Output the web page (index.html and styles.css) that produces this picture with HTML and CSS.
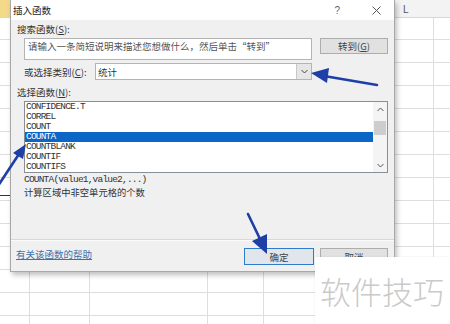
FILE: index.html
```html
<!DOCTYPE html>
<html lang="zh-CN">
<head>
    <meta charset="UTF-8">
    <meta name="viewport" content="width=device-width, initial-scale=1.0">
    <title>插入函数</title>
    <link rel="stylesheet" href="styles.css">
</head>
<body>
    <div class="sheet">
        <div class="sheet-head">
            <span class="sel-col"></span>
            <span class="col-l">L</span>
        </div>
        <div class="sheet-body">
            <span class="cell-mark"></span>
        </div>
    </div>

    <div class="dialog">
        <div class="titlebar">
            <span class="title">插入函数</span>
            <span class="help">?</span>
            <svg class="close" width="9" height="9" viewBox="0 0 9 9">
                <path d="M0.5 0.5 L8.5 8.5 M8.5 0.5 L0.5 8.5" stroke="#555" stroke-width="1" fill="none"/>
            </svg>
        </div>

        <div class="lbl">搜索函数(<u>S</u>):</div>
        <div class="search-row">
            <div class="search-box">请输入一条简短说明来描述您想做什么，然后单击“转到”</div>
            <div class="btn go">转到(<u>G</u>)</div>
        </div>

        <div class="cat-row">
            <span class="cat-lbl">或选择类别(<u>C</u>):</span>
            <div class="combo">
                <span class="combo-text">统计</span>
                <span class="combo-drop">
                    <svg width="7" height="5" viewBox="0 0 7 5">
                        <polyline points="0.5,1 3.5,4 6.5,1" stroke="#444" stroke-width="1" fill="none"/>
                    </svg>
                </span>
            </div>
        </div>

        <div class="lbl lbl-list">选择函数(<u>N</u>):</div>
        <div class="list">
            <div class="items">
                <div class="item">CONFIDENCE.T</div>
                <div class="item">CORREL</div>
                <div class="item">COUNT</div>
                <div class="item selected">COUNTA</div>
                <div class="item">COUNTBLANK</div>
                <div class="item">COUNTIF</div>
                <div class="item">COUNTIFS</div>
            </div>
            <div class="scroll">
                <span class="arrow">
                    <svg width="7" height="5" viewBox="0 0 7 5">
                        <polyline points="0.5,4 3.5,1 6.5,4" stroke="#555" stroke-width="1" fill="none"/>
                    </svg>
                </span>
                <span class="thumb"></span>
                <span class="track"></span>
                <span class="arrow">
                    <svg width="7" height="5" viewBox="0 0 7 5">
                        <polyline points="0.5,1 3.5,4 6.5,1" stroke="#555" stroke-width="1" fill="none"/>
                    </svg>
                </span>
            </div>
        </div>

        <div class="desc">
            <div class="syntax">COUNTA(value1,value2,...)</div>
            <div class="summary">计算区域中非空单元格的个数</div>
        </div>

        <div class="sep"></div>

        <div class="foot">
            <a class="help-link" href="#">有关该函数的帮助</a>
            <div class="btn ok">确定</div>
            <div class="btn cancel">取消</div>
        </div>
    </div>

    <div class="watermark">软件技巧</div>

    <svg class="arrows" width="450" height="324" viewBox="0 0 450 324">
        <g stroke="#1d3fa6" stroke-width="2.6" fill="none" stroke-linecap="round">
            <line x1="-2" y1="186" x2="19" y2="154"/>
            <line x1="377" y1="85" x2="324" y2="76"/>
            <line x1="248" y1="214" x2="260" y2="239"/>
        </g>
        <g fill="#1d3fa6">
            <polygon points="26,144 23,159 13,153"/>
            <polygon points="311,73 329,68 327,83"/>
            <polygon points="267,254 252,241 267,234"/>
        </g>
    </svg>
</body>
</html>
```

FILE: styles.css
```css
* {
    margin: 0;
    padding: 0;
    box-sizing: border-box;
}
body {
    width: 450px;
    height: 324px;
    overflow: hidden;
    position: relative;
    background-color: white;
    font-family: "Noto Sans CJK SC", sans-serif;
}
.sheet-head {
    height: 18px;
    display: flex;
    background-color: #f3f3f3;
    border-bottom: 1px solid #d6d6d6;
}
.sel-col {
    width: 10px;
    height: 17px;
    background-color: #f5d98a;
}
.col-l {
    margin-left: 393px;
    font-family: "Liberation Sans", sans-serif;
    font-size: 10px;
    line-height: 20px;
    color: #555;
}
.sheet-body {
    height: 306px;
    display: flex;
    flex-direction: column;
    background-image:
        repeating-linear-gradient(to bottom, transparent 0 21px, #dedede 21px 22px, transparent 22px 23px),
        linear-gradient(to right, transparent 0 29px, #dedede 29px 30px, transparent 30px 89px, #dedede 89px 90px, transparent 90px 207px, #dedede 207px 208px, transparent 208px 263px, #dedede 263px 264px, transparent 264px 433px, #dedede 433px 434px, transparent 434px);
}
.cell-mark {
    width: 10px;
    height: 1px;
    margin-top: 177px;
    background-color: #333;
}

/* dialog window */
.dialog {
    position: absolute;
    left: 10px;
    top: 0;
    width: 385px;
    height: 272px;
    border: 1px solid #a8a8a8;
    border-top: none;
    background-color: #f0f0f0;
    box-shadow: 2px 3px 5px rgba(0, 0, 0, 0.25);
    font-size: 9.5px;
    color: #333;
}
.titlebar {
    height: 20px;
    display: flex;
    align-items: center;
    background-color: white;
    padding-left: 2px;
}
.title {
    flex: 1;
    font-size: 9.5px;
    color: #222;
}
.help {
    font-family: "Liberation Sans", sans-serif;
    font-size: 10px;
    color: #666;
    margin-right: 32px;
}
.close {
    margin-right: 13px;
}
.lbl {
    height: 10px;
    line-height: 10px;
    margin: 4px 0 0 6px;
}
.lbl-list {
    margin-top: 7px;
}
.search-row {
    display: flex;
    align-items: flex-start;
    margin: 4px 0 0 13px;
}
.search-box {
    width: 288px;
    height: 22px;
    border: 1px solid #b4b4b4;
    background-color: white;
    padding: 2px 3px;
    line-height: 10px;
    color: #555;
    white-space: nowrap;
    overflow: hidden;
}
.btn {
    height: 17px;
    border: 1px solid #adadad;
    background-color: #e1e1e1;
    display: flex;
    justify-content: center;
    align-items: center;
    color: #444;
}
.go {
    width: 68px;
    height: 16px;
    margin-left: 8px;
}
.cat-row {
    display: flex;
    align-items: center;
    height: 17px;
    margin: 3px 0 0 13px;
}
.cat-lbl {
    width: 71px;
}
.combo {
    width: 217px;
    height: 17px;
    border: 1px solid #b4b4b4;
    background-color: white;
    display: flex;
    align-items: center;
}
.combo-text {
    flex: 1;
    padding-left: 2px;
}
.combo-drop {
    width: 15px;
    height: 15px;
    background-color: #e6e6e6;
    border-left: 1px solid #c8c8c8;
    display: flex;
    justify-content: center;
    align-items: center;
}
.list {
    width: 364px;
    height: 72px;
    margin: 4px 0 0 13px;
    border: 1px solid #8a8e96;
    background-color: white;
    display: flex;
}
.items {
    flex: 1;
}
.item {
    height: 10px;
    line-height: 10px;
    padding-left: 1px;
    font-family: "Liberation Mono", monospace;
    font-size: 9.5px;
    letter-spacing: -0.8px;
    color: #333;
}
.item.selected {
    background-color: #0b66c6;
    color: white;
}
.scroll {
    width: 14px;
    display: flex;
    flex-direction: column;
    background-color: #f4f4f4;
}
.arrow {
    height: 14px;
    display: flex;
    justify-content: center;
    align-items: center;
}
.thumb {
    height: 14px;
    margin: 5px 1px 0;
    background-color: #cdcdcd;
}
.track {
    flex: 1;
}
.desc {
    margin: 2px 0 0 13px;
}
.syntax {
    height: 10px;
    line-height: 10px;
    font-family: "Liberation Mono", monospace;
    font-size: 9.5px;
    letter-spacing: -0.8px;
}
.summary {
    height: 11px;
    line-height: 11px;
    margin-top: 2px;
    font-size: 9.3px;
}
.sep {
    height: 2px;
    margin-top: 41px;
    border-top: 1px solid #d8d8d8;
    border-bottom: 1px solid #fafafa;
}
.foot {
    display: flex;
    align-items: flex-start;
    margin-top: 7px;
}
.help-link {
    flex: 1;
    margin: 1px 0 0 5px;
    line-height: 10px;
    color: #3d72aa;
}
.ok {
    width: 70px;
    border-color: #2f7bc8;
    background-color: #e1e6ec;
}
.cancel {
    width: 68px;
    margin: 0 6px;
}

/* overlays */
.watermark {
    position: absolute;
    left: 315px;
    top: 257px;
    width: 135px;
    height: 67px;
    background-color: white;
    padding-left: 5px;
    font-size: 31px;
    font-weight: 300;
    line-height: 67px;
    color: #cacaca;
    box-shadow: 0 0 2px rgba(0, 0, 0, 0.08);
}
.arrows {
    position: absolute;
    left: 0;
    top: 0;
    pointer-events: none;
}
```
